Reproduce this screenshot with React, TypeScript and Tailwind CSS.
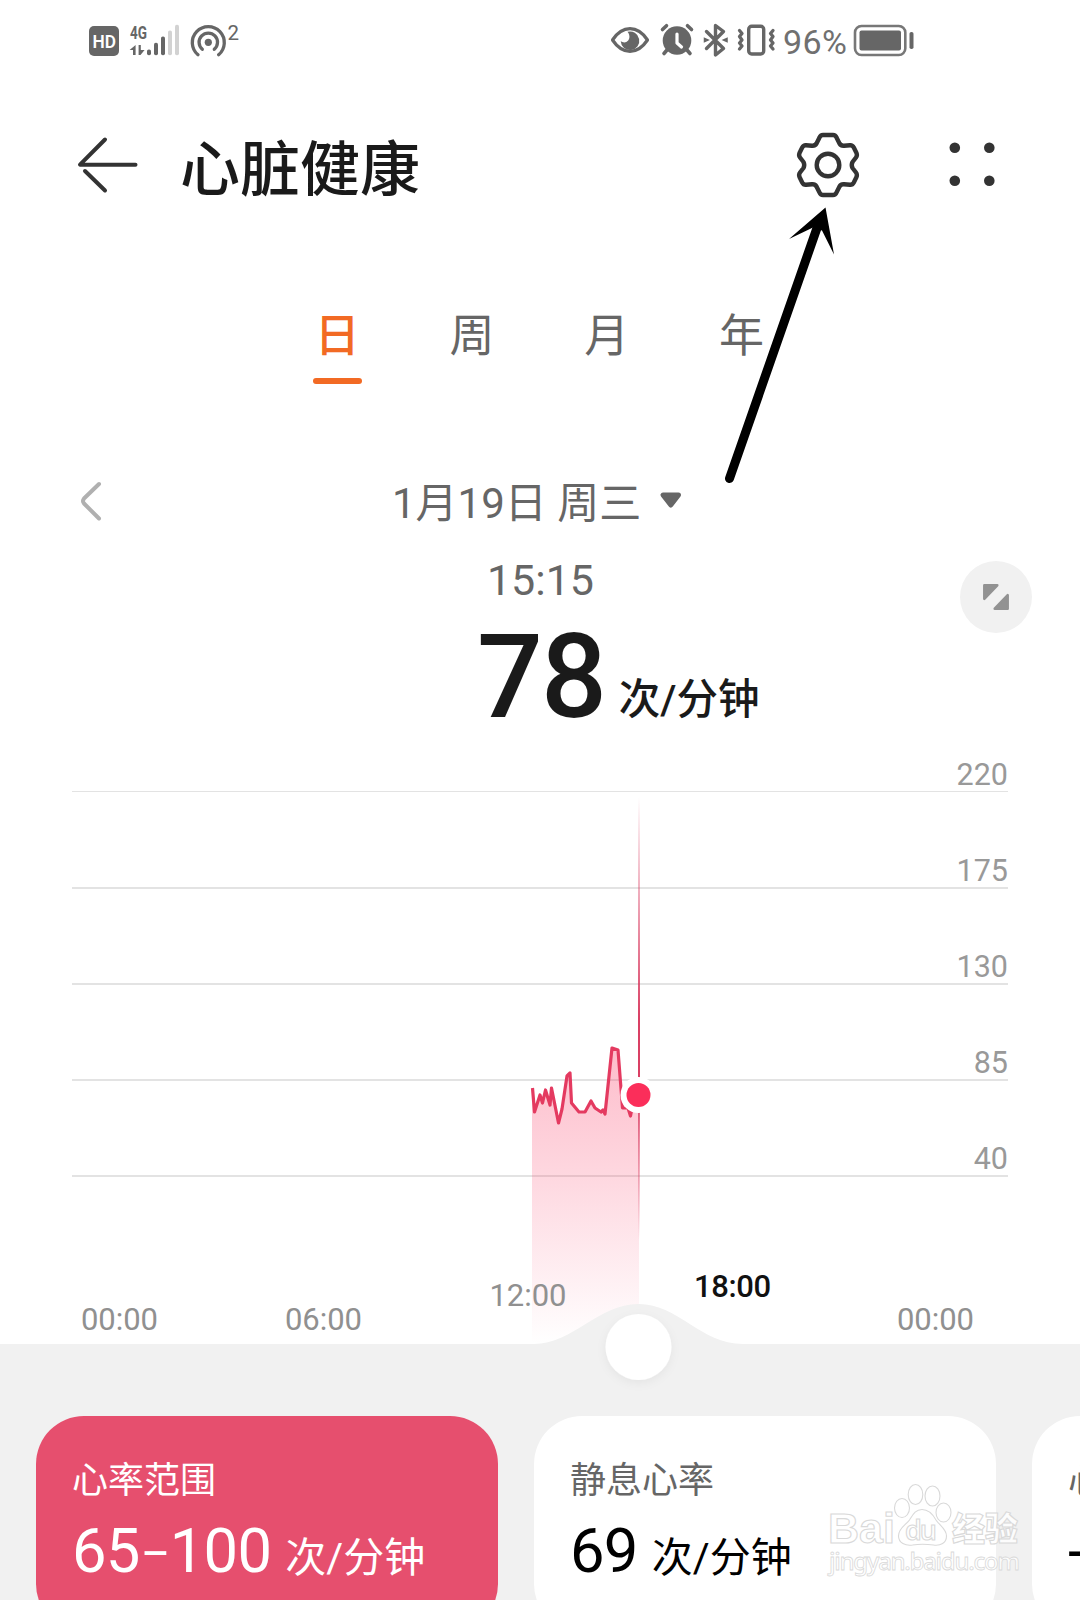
import React from 'react';

const GRID = [
  { y: 791.5, label: '220', w: 1 },
  { y: 888, label: '175', w: 2 },
  { y: 984, label: '130', w: 2 },
  { y: 1080, label: '85', w: 2 },
  { y: 1176, label: '40', w: 2 },
];

const HOURS = [
  { x: 119.5, y: 1330, label: '00:00' },
  { x: 323.5, y: 1330, label: '06:00' },
  { x: 528, y: 1306, label: '12:00' },
  { x: 935.5, y: 1330, label: '00:00' },
];

const TRACE =
  '532.5,1088 534.5,1112 540,1095 542.5,1103 545.5,1090 550,1105 551.5,1088 558.5,1123 562,1109 567,1076 570,1073 571.5,1103 579,1112 585,1112 591,1101 595,1108 601,1112 603,1110 605,1114 612,1048 618,1050 622.5,1108 628,1108 630.5,1116 632,1108 639,1096';

function StatusLeft() {
  return (
    <svg className="block" width="160" height="80" viewBox="85 0 160 80">
      <rect x="89" y="26" width="30" height="30" rx="5" fill="#666" />
      <text x="92.500" y="48" fontSize="18.500" textLength="23.500" lengthAdjust="spacingAndGlyphs" className="font-['Roboto',sans-serif] font-semibold" fill="#fff">HD</text>
      <text x="130" y="38.500" fontSize="19" textLength="17" lengthAdjust="spacingAndGlyphs" className="font-['Roboto',sans-serif] font-bold" fill="#666">4G</text>
      <path d="M135.600 45V55h-2.600v-5h-3.400zM138.600 45h2.200v5h3.800L140.500 55h-1.900z" fill="#666" />
      <rect x="147" y="49.500" width="4" height="5.800" rx="1.800" fill="#666" />
      <rect x="154" y="42.700" width="4" height="12.600" rx="1.800" fill="#666" />
      <rect x="161" y="36.500" width="4" height="18.800" rx="1.800" fill="#666" />
      <rect x="168" y="30.500" width="4" height="24.800" rx="1.800" fill="#d2d2d2" />
      <rect x="175" y="24.700" width="4" height="30.600" rx="1.800" fill="#d2d2d2" />
      <circle cx="208.300" cy="42.300" r="3.600" fill="#666" />
      <g fill="none" stroke="#666" strokeWidth="3.300" strokeLinecap="round">
        <path d="M202.300 49.300a9.200 9.200 0 1 1 12 0" />
        <path d="M198 54.800a16 16 0 1 1 20.600 0" />
      </g>
      <text x="227.500" y="39.500" fontSize="20.500" className="font-['Roboto',sans-serif]" fill="#666">2</text>
    </svg>
  );
}

function StatusRight() {
  return (
    <svg className="block" width="310" height="80" viewBox="606 0 310 80">
      <path d="M612.500 40c5-7.500 11-11.300 17.500-11.300S642.500 32.500 647.500 40c-5 7.500-11 11.300-17.500 11.300S617.500 47.500 612.500 40z" fill="none" stroke="#666" strokeWidth="3.200" strokeLinejoin="round" />
      <path d="M627.500 31.800a9.300 9.300 0 1 1 -6.800 9.500c2.500 1.600 5.500 1.600 7.500-.8s1.500-6.200-.7-8.700z" fill="#666" />
      <circle cx="677" cy="40.500" r="14.300" fill="#666" />
      <g stroke="#666" strokeWidth="3.600" strokeLinecap="round">
        <path d="M662.500 29.500l4-3.800M691.500 29.500l-4-3.800M667 50l-3 3.500M687 50l3 3.500" />
      </g>
      <path d="M677 34v9l4.500 4" fill="none" stroke="#fff" strokeWidth="3.200" strokeLinecap="round" strokeLinejoin="round" />
      <path d="M706.500 31.500L723.500 48.500 715.500 55V25.500L723.500 31.500 706.500 48.500" fill="none" stroke="#666" strokeWidth="3.400" strokeLinejoin="round" strokeLinecap="round" />
      <path d="M704.500 38.500l3.500 1.500-3.500 1.500zM727 38.500l-3.500 1.500 3.500 1.500z" stroke="#666" fill="#666" strokeWidth="1.500" />
      <rect x="748.700" y="26.200" width="15" height="27.800" rx="3" fill="none" stroke="#666" strokeWidth="3.400" />
      <g fill="none" stroke="#666" strokeWidth="3.300" strokeLinejoin="round" strokeLinecap="round">
        <path d="M739.500 30.500l2.500 3-2.500 3 2.500 3.500-2.500 3 2.500 3-2.500 3" />
        <path d="M773 30.500l-2.500 3 2.500 3-2.500 3.500 2.500 3-2.500 3 2.500 3" />
      </g>
      <text x="783" y="53.500" fontSize="34" textLength="64" className="font-['Roboto',sans-serif] font-normal" fill="#707070">96%</text>
      <rect x="855" y="26" width="50.300" height="29" rx="6.500" fill="none" stroke="#777" strokeWidth="2.600" />
      <rect x="859.500" y="30.500" width="41.500" height="20" rx="2" fill="#666" />
      <rect x="909.500" y="32" width="4" height="17" rx="1.800" fill="#666" />
    </svg>
  );
}

function Gear() {
  return (
    <svg className="block" width="70" height="70" viewBox="-35 -35 70 70" fill="none" stroke="#333" strokeWidth="4.400" strokeLinejoin="round">
      <path d="M-5-30H5Q7.500-30 8.500-27.500L11.500-21.500Q13-19 16-19.300L22-19.800Q24.500-20 25.800-17.500L28.500-12Q29.500-9.500 28-7.500L24.500-3Q23 0 24.500 3L28 7.500Q29.500 9.500 28.500 12L25.800 17.500Q24.500 20 22 19.800L16 19.300Q13 19 11.500 21.500L8.500 27.500Q7.500 30 5 30H-5Q-7.500 30-8.500 27.500L-11.500 21.500Q-13 19-16 19.300L-22 19.800Q-24.500 20-25.800 17.500L-28.500 12Q-29.500 9.500-28 7.500L-24.500 3Q-23 0-24.500-3L-28-7.500Q-29.500-9.500-28.500-12L-25.800-17.500Q-24.500-20-22-19.800L-16-19.300Q-13-19-11.500-21.500L-8.500-27.500Q-7.500-30-5-30z" />
      <circle r="11.300" />
    </svg>
  );
}

function Chart() {
  return (
    <svg className="block shrink-0" width="1080" height="684" viewBox="0 732 1080 684">
      <defs>
        <linearGradient id="area" gradientUnits="userSpaceOnUse" x1="0" y1="1048" x2="0" y2="1344">
          <stop offset="0" stopColor="#fa3560" stopOpacity="0.33" />
          <stop offset="0.45" stopColor="#fa3560" stopOpacity="0.19" />
          <stop offset="1" stopColor="#fa3560" stopOpacity="0" />
        </linearGradient>
        <linearGradient id="cursor" gradientUnits="userSpaceOnUse" x1="0" y1="797" x2="0" y2="1240">
          <stop offset="0" stopColor="#d8365c" stopOpacity="0" />
          <stop offset="0.5" stopColor="#d8365c" stopOpacity="0.95" />
          <stop offset="0.65" stopColor="#d8365c" stopOpacity="0.95" />
          <stop offset="0.78" stopColor="#d8365c" stopOpacity="0.55" />
          <stop offset="1" stopColor="#d8365c" stopOpacity="0" />
        </linearGradient>
        <filter id="knob" x="-50%" y="-50%" width="200%" height="200%">
          <feDropShadow dx="0" dy="3" stdDeviation="5" floodColor="#000" floodOpacity="0.05" />
        </filter>
      </defs>
      {GRID.map((g) => (
        <g key={g.label}>
          <rect x="72" y={g.y - g.w / 2} width="936" height={g.w} fill="#e3e3e3" />
          <text x="1008" y={g.y - 6.8} textAnchor="end" fontSize="30.500" className="font-['Roboto',sans-serif]" fill="#999">{g.label}</text>
        </g>
      ))}
      <polygon points={'532,1344 532,1088 ' + TRACE + ' 639,1344'} fill="url(#area)" />
      <polyline points={TRACE} fill="none" stroke="#e43a60" strokeWidth="3.200" strokeLinejoin="round" />
      <rect x="638" y="797" width="2" height="443" fill="url(#cursor)" />
      <circle cx="638.500" cy="1095" r="18" fill="#fff" />
      <circle cx="638.500" cy="1095" r="12" fill="#fb2e5a" />
      {HOURS.map((h) => (
        <text key={h.x} x={h.x} y={h.y} textAnchor="middle" fontSize="31" textLength="77" className="font-['Roboto',sans-serif]" fill="#909090">{h.label}</text>
      ))}
      <text x="732.500" y="1297" textAnchor="middle" fontSize="31" textLength="77" className="font-['Roboto',sans-serif] font-medium" fill="#111">18:00</text>
      <path d="M0 1344H534C573 1344 598 1304 638.500 1304C679 1304 700 1344 743 1344H1080V1416H0z" fill="#f1f1f1" />
      <circle cx="638.500" cy="1347" r="33" fill="#fff" filter="url(#knob)" />
    </svg>
  );
}

function Card({ label, children, active }: { label: string; children: React.ReactNode; active?: boolean }) {
  return (
    <div className={'h-[216px] w-[462px] shrink-0 rounded-[48px] pl-9 pt-[43px] ' + (active ? 'bg-[#e64f6e] text-white' : 'bg-white text-black')}>
      <div className={"font-['Noto_Sans_CJK_SC',sans-serif] text-[36px] leading-none " + (active ? 'text-white' : 'text-[#666]')}>{label}</div>
      <div className="mt-[26px] flex items-start whitespace-nowrap">
        <span className="font-['Roboto',sans-serif] text-[61.5px] font-[450] leading-none tracking-[-0.7px]">{children}</span>
        <span className="ml-[14px] mt-[17px] font-['Roboto','Noto_Sans_CJK_SC',sans-serif] text-[41px] leading-none">次/分钟</span>
      </div>
    </div>
  );
}

function Watermark() {
  return (
    <svg className="absolute left-[820px] top-[1476px]" width="210" height="110" viewBox="820 1476 210 110" fill="#fff" fillOpacity="0.85" stroke="#d9d9d9" strokeWidth="1.100">
      <text x="828" y="1543" fontSize="43" textLength="67" lengthAdjust="spacingAndGlyphs" className="font-['Liberation_Sans',sans-serif] font-bold">Bai</text>
      <ellipse cx="902" cy="1508" rx="7.500" ry="9.500" />
      <ellipse cx="915.500" cy="1494.500" rx="7.300" ry="10" />
      <ellipse cx="932.500" cy="1496" rx="7.500" ry="10" />
      <ellipse cx="943.500" cy="1512.500" rx="7.500" ry="9.500" />
      <path d="M922 1509.500c7 0 11 5 14 10.500 3 5 10.500 9 10.500 16 0 7-6 10-13 9-7-1-15-1-21 0-7 1-14-2-14-9 0-8 7.500-11 11-16 3.500-5.500 6-10.500 12.500-10.500z" />
      <text x="905" y="1540" fontSize="27" textLength="32" className="font-['Open_Sans',sans-serif] font-semibold">du</text>
      <text x="952" y="1541" fontSize="33" textLength="66" className="font-['Noto_Sans_CJK_SC',sans-serif] font-black">经验</text>
      <text x="829" y="1570" fontSize="24" textLength="191" strokeWidth="0.800" className="font-['Noto_Sans',sans-serif] font-medium">jingyan.baidu.com</text>
    </svg>
  );
}

export default function App() {
  const tabs = ['日', '周', '月', '年'];
  return (
    <div className="relative flex h-[1600px] w-[1080px] flex-col overflow-hidden bg-white">
      <div className="flex h-20 shrink-0 justify-between pl-[85px] pr-[164px]">
        <StatusLeft />
        <StatusRight />
      </div>

      <header className="flex h-[170px] shrink-0 items-center pl-[76px] pr-[83px]">
        <svg width="64" height="60" viewBox="76 135 64 60" fill="none" stroke="#333" strokeWidth="4" strokeLinecap="round" strokeLinejoin="round">
          <path d="M105 139.500L80 164.700H135.500M105 190.500L85 171" />
        </svg>
        <h1 className="ml-[40px] font-['Noto_Sans_CJK_SC',sans-serif] text-[60px] font-medium leading-none text-[#1a1a1a]">心脏健康</h1>
        <div className="ml-auto mr-[84px]"><Gear /></div>
        <svg width="50" height="60" viewBox="947 135 50 60" fill="#333">
          <circle cx="954.800" cy="147.700" r="5.300" />
          <circle cx="989.300" cy="147.700" r="5.300" />
          <circle cx="954.800" cy="180.700" r="5.300" />
          <circle cx="989.300" cy="180.700" r="5.300" />
        </svg>
      </header>

      <nav className="ml-[270px] grid w-[539px] shrink-0 grid-cols-4 pt-[60px] font-['Noto_Sans_CJK_SC',sans-serif] text-[45px] leading-none text-[#666]">
        {tabs.map((t, i) => (
          <div key={t} className="flex flex-col items-center">
            <span className={i === 0 ? 'font-medium text-[#f26a24]' : ''}>{t}</span>
            <span className={'mt-[23px] h-[6px] w-[49px] rounded-full ' + (i === 0 ? 'bg-[#f26a24]' : '')} />
          </div>
        ))}
      </nav>

      <div className="mt-[77px] flex h-20 shrink-0 items-center pl-[78px] text-[#666]">
        <svg width="26" height="44" viewBox="0 0 26 44" fill="none" stroke="#b0b0b0" strokeWidth="4" strokeLinecap="round" strokeLinejoin="round">
          <path d="M21 5L6 19.500Q4 22 6 24.500L21 39.500" />
        </svg>
        <span className="ml-[288px] mt-[5px] whitespace-nowrap font-['Roboto','Noto_Sans_CJK_SC',sans-serif] text-[42px] leading-none">1月19日 周三</span>
        <svg className="ml-[18px]" width="24" height="20" viewBox="0 0 24 20" fill="#666" stroke="#666" strokeWidth="5" strokeLinejoin="round">
          <path d="M4 4H19.500L11.800 14z" />
        </svg>
      </div>

      <div className="mt-[18px] shrink-0 pl-[1px] text-center font-['Roboto',sans-serif] text-[43px] leading-none text-[#666]">15:15</div>

      <div className="mt-[17px] flex h-[113px] shrink-0 items-start pl-[477px] text-[#1a1a1a]">
        <span className="font-['Roboto',sans-serif] text-[116px] font-medium leading-none tracking-[-2px]">78</span>
        <span className="ml-[14px] mt-[60px] font-['Roboto','Noto_Sans_CJK_SC',sans-serif] text-[41.5px] font-medium leading-none">次/分钟</span>
      </div>

      <Chart />

      <div className="flex h-[184px] shrink-0 gap-9 overflow-hidden bg-[#f1f1f1] pl-9">
        <Card label="心率范围" active>
          65<span className="relative -top-[3px] inline-block w-[30px] text-center font-['Lato',sans-serif] text-[54px] leading-none">–</span>100
        </Card>
        <Card label="静息心率">69</Card>
        <Card label="心率过高">--</Card>
      </div>

      <button className="absolute left-[960px] top-[561px] flex h-[72px] w-[72px] items-center justify-center rounded-full bg-[#f1f1f1]">
        <svg width="28" height="28" viewBox="0 0 28 28" fill="#929292" stroke="#929292" strokeWidth="2.500" strokeLinejoin="round">
          <path d="M2.300 2.300H15.300L2.300 15.800zM25.700 25.700H12.700L25.700 12.200z" />
        </svg>
      </button>

      <svg className="absolute left-[715px] top-[200px]" width="130" height="290" viewBox="715 200 130 290">
        <path d="M817 228L729.500 478.500" stroke="#000" strokeWidth="9" strokeLinecap="round" />
        <path d="M825.500 207.500L834 254.500 822 230.500 813 227.500 789 239z" fill="#000" />
      </svg>

      <Watermark />
    </div>
  );
}
